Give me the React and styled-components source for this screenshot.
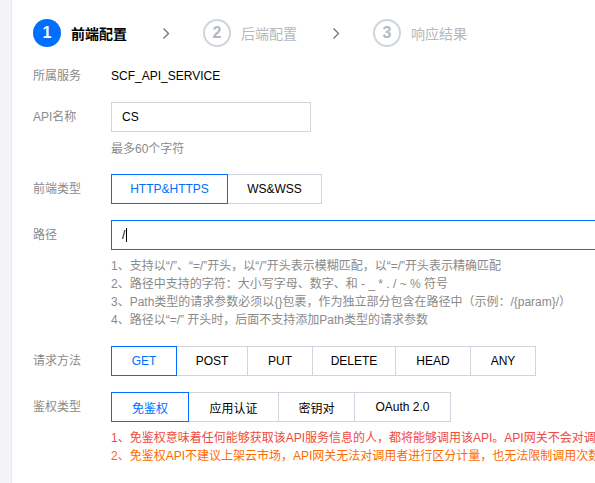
import React from "react";
import styled, { createGlobalStyle } from "styled-components";

const Global = createGlobalStyle`
  html, body { margin: 0; padding: 0; background: #fff; overflow: hidden; }
  body { font-family: "Liberation Sans", "Noto Sans CJK SC", sans-serif; font-size: 12px; color: #000; }
  * { box-sizing: border-box; }
`;

const Page = styled.div`
  display: flex;
  width: 595px;
  height: 483px;
  overflow: hidden;
`;

const SideStrip = styled.div`
  width: 12px;
  flex: none;
  background: #f3f4f7;
  border-right: 1px solid #e9ebef;
`;

const Main = styled.div`
  flex: 1;
  min-width: 0;
  padding: 19px 0 0 21px;
  overflow: hidden;
`;

const Steps = styled.div`
  display: flex;
  align-items: center;
  height: 28px;
`;

const StepItem = styled.div`
  display: flex;
  align-items: center;
  gap: 10px;
`;

const StepCircle = styled.div`
  width: 28px;
  height: 28px;
  border-radius: 50%;
  display: flex;
  align-items: center;
  justify-content: center;
  font-size: 16px;
  font-weight: bold;
  background: ${(p) => (p.$active ? "#006eff" : "#fff")};
  color: ${(p) => (p.$active ? "#fff" : "#b4b8c0")};
  border: ${(p) => (p.$active ? "none" : "2px solid #cfd4dd")};
`;

const StepText = styled.span`
  font-size: 14px;
  font-weight: ${(p) => (p.$active ? "bold" : "normal")};
  color: ${(p) => (p.$active ? "#000" : "#b4b8c0")};
`;

const Chevron = styled.svg`
  width: 8px;
  height: 13px;
  margin: 0 33px 0 35px;
  flex: none;
`;

const Row = styled.div`
  display: flex;
  align-items: center;
  margin-top: ${(p) => p.$mt}px;
`;

const Label = styled.div`
  width: 78px;
  flex: none;
  color: #8a8a8a;
  line-height: 18px;
`;

const Value = styled.div`
  color: #000;
  line-height: 18px;
`;

const TextInput = styled.div`
  width: ${(p) => p.$w}px;
  height: 30px;
  flex: none;
  border: 1px solid ${(p) => (p.$focus ? "#006eff" : "#cfd5de")};
  padding: 0 10px;
  display: flex;
  align-items: center;
  color: #000;
  font-size: 12px;
`;

const Caret = styled.span`
  display: inline-block;
  width: 1px;
  height: 14px;
  background: #000;
  margin-left: 1px;
`;

const Block = styled.div`
  margin-top: ${(p) => p.$mt}px;
  padding-left: 78px;
`;

const Line = styled.div`
  line-height: 18px;
  white-space: nowrap;
  color: ${(p) => p.$color || "#8a8a8a"};
`;

const Group = styled.div`
  display: flex;
`;

const SegButton = styled.div`
  width: ${(p) => p.$w}px;
  height: 30px;
  display: flex;
  align-items: center;
  justify-content: center;
  border: 1px solid ${(p) => (p.$active ? "#006eff" : "#cfd5de")};
  color: ${(p) => (p.$active ? "#006eff" : "#000")};
  margin-left: -1px;
  position: relative;
  z-index: ${(p) => (p.$active ? 1 : 0)};
  background: #fff;
  &:first-child { margin-left: 0; }
`;

const ChevronIcon = () => (
  <Chevron viewBox="0 0 8 13">
    <path d="M1.5 1.5 L6.5 6.5 L1.5 11.5" fill="none" stroke="#777" strokeWidth="1.4" />
  </Chevron>
);

const methods = [
  ["GET", 66, true],
  ["POST", 72],
  ["PUT", 66],
  ["DELETE", 84],
  ["HEAD", 76],
  ["ANY", 66],
];

const auths = [
  ["免鉴权", 78, true],
  ["应用认证", 91],
  ["密钥对", 77],
  ["OAuth 2.0", 97],
];

export default function App() {
  return (
    <>
      <Global />
      <Page>
        <SideStrip />
        <Main>
          <Steps>
            <StepItem>
              <StepCircle $active>1</StepCircle>
              <StepText $active>前端配置</StepText>
            </StepItem>
            <ChevronIcon />
            <StepItem>
              <StepCircle>2</StepCircle>
              <StepText>后端配置</StepText>
            </StepItem>
            <ChevronIcon />
            <StepItem>
              <StepCircle>3</StepCircle>
              <StepText>响应结果</StepText>
            </StepItem>
          </Steps>

          <Row $mt={20}>
            <Label>所属服务</Label>
            <Value>SCF_API_SERVICE</Value>
          </Row>

          <Row $mt={17}>
            <Label>API名称</Label>
            <TextInput $w={200}>CS</TextInput>
          </Row>
          <Block $mt={8}>
            <Line>最多60个字符</Line>
          </Block>

          <Row $mt={16}>
            <Label>前端类型</Label>
            <Group>
              <SegButton $w={117} $active>HTTP&amp;HTTPS</SegButton>
              <SegButton $w={95}>WS&amp;WSS</SegButton>
            </Group>
          </Row>

          <Row $mt={16}>
            <Label>路径</Label>
            <TextInput $w={600} $focus>
              /<Caret />
            </TextInput>
          </Row>
          <Block $mt={7}>
            <Line>1、支持以“/”、“=/”开头，以“/”开头表示模糊匹配，以“=/”开头表示精确匹配</Line>
            <Line>2、路径中支持的字符：大小写字母、数字、和 - _ * . / ~ % 符号</Line>
            <Line>3、Path类型的请求参数必须以{"{}"}包裹，作为独立部分包含在路径中（示例：/{"{param}"}/）</Line>
            <Line>4、路径以“=/” 开头时，后面不支持添加Path类型的请求参数</Line>
          </Block>

          <Row $mt={17}>
            <Label>请求方法</Label>
            <Group>
              {methods.map(([t, w, a]) => (
                <SegButton key={t} $w={w} $active={a}>{t}</SegButton>
              ))}
            </Group>
          </Row>

          <Row $mt={16}>
            <Label>鉴权类型</Label>
            <Group>
              {auths.map(([t, w, a]) => (
                <SegButton key={t} $w={w} $active={a}>{t}</SegButton>
              ))}
            </Group>
          </Row>
          <Block $mt={7}>
            <Line $color="#f04a3e">1、免鉴权意味着任何能够获取该API服务信息的人，都将能够调用该API。API网关不会对调用者做任何权限检查</Line>
            <Line $color="#ff6a00">2、免鉴权API不建议上架云市场，API网关无法对调用者进行区分计量，也无法限制调用次数</Line>
          </Block>
        </Main>
      </Page>
    </>
  );
}
